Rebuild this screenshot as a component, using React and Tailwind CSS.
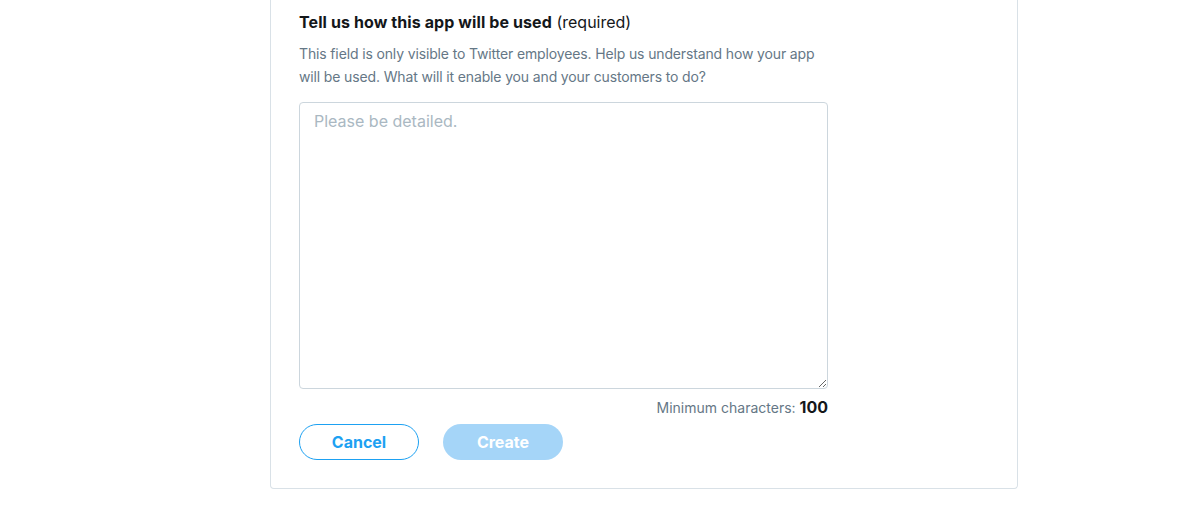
export default function App() {
  return (
    <div className="w-[1200px] h-[506px] bg-white overflow-hidden" style={{ fontFamily: 'Inter, "Noto Sans", sans-serif' }}>
      <div className="ml-[270px] w-[748px] border-x border-b border-[#d9e1e7] rounded-b-[4px] px-[28px] pt-[12px] pb-[28px]">
        <div className="text-[16px] leading-[20px] text-[#14171a]">
          <span className="font-bold tracking-[0.1px]">Tell us how this app will be used</span> <span>(required)</span>
        </div>
        <p className="mt-[10px] w-[529px] text-[14px] leading-[23px] text-[#657786] tracking-[-0.14px]">
          This field is only visible to Twitter employees. Help us understand how your app will be used. What will it enable you and your customers to do?
        </p>
        <textarea
          className="mt-[14px] block w-[529px] h-[287px] border border-[#ccd6dd] rounded-[4px] px-[14px] py-[8px] text-[16px] leading-[20px] text-[#14171a] placeholder:text-[#aab8c2] outline-none resize"
          placeholder="Please be detailed."
        />
        <div className="w-[529px] mt-[8px] text-right text-[14px] leading-[20px] text-[#657786]">
          Minimum characters: <span className="text-[16px] font-bold text-[#14171a]">100</span>
        </div>
        <div className="mt-[6px] flex gap-[24px]">
          <button className="w-[120px] h-[36px] rounded-full border border-[#1da1f2] text-[#1da1f2] text-[16px] font-bold bg-white">
            Cancel
          </button>
          <button className="w-[120px] h-[36px] rounded-full bg-[#a5d5f8] text-white text-[16px] font-bold">
            Create
          </button>
        </div>
      </div>
    </div>
  );
}
